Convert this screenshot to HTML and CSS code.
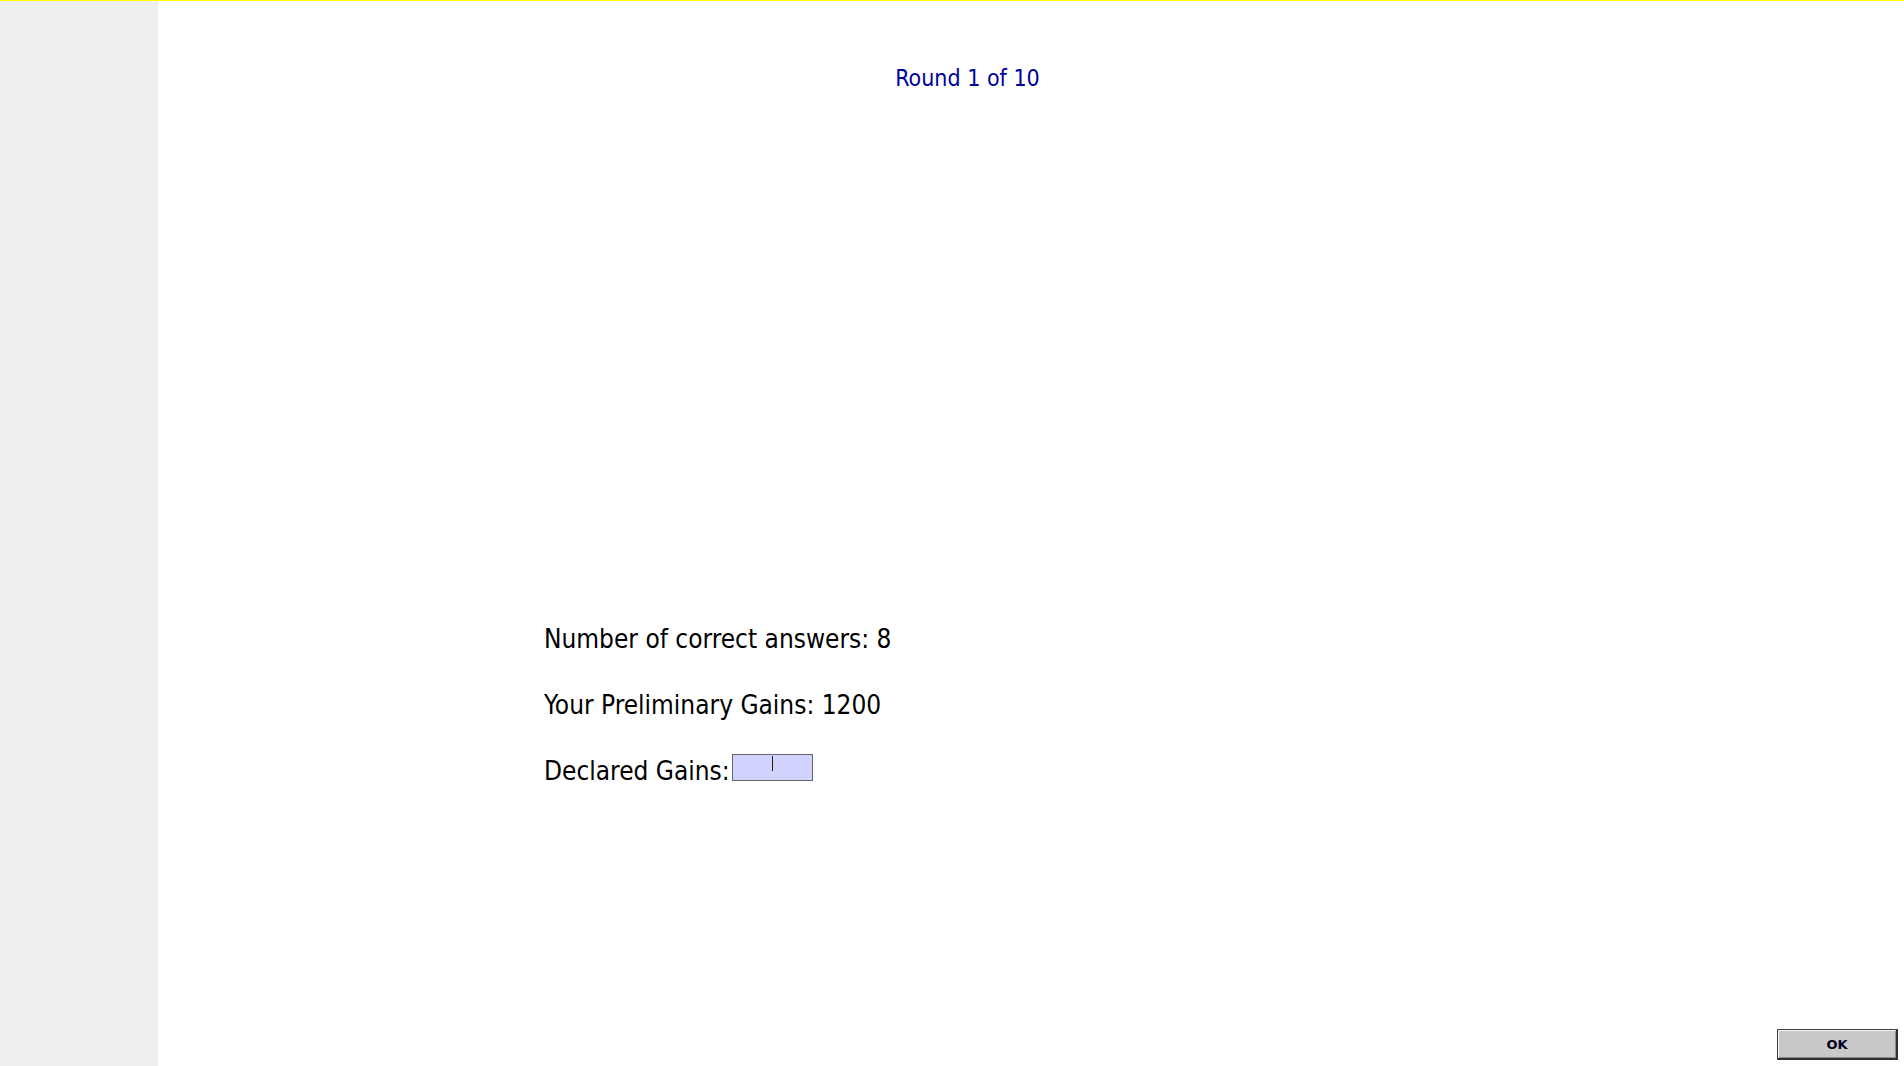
FILE: index.html
```html
<!DOCTYPE html>
<html lang="en">
<head>
<meta charset="utf-8">
<title>Round 1 of 10</title>
<link rel="stylesheet" href="styles.css">
</head>
<body>
<div class="page">
  <aside class="sidebar"></aside>
  <main class="main">
    <h1 class="round">Round 1 of 10</h1>
    <section class="info">
      <p class="line">Number of correct answers: 8</p>
      <p class="line">Your Preliminary Gains: 1200</p>
      <div class="line declared">
        <label for="gains">Declared Gains:</label>
        <span class="field"><input id="gains" class="gains-input" type="text"><span class="caret"></span></span>
      </div>
    </section>
  </main>
  <div class="actions">
    <button class="ok-btn" type="button">OK</button>
  </div>
</div>
</body>
</html>
```

FILE: styles.css
```css
html, body {
  margin: 0;
  padding: 0;
  background: #ffffff;
}

.page {
  display: grid;
  grid-template-columns: 158px 1fr 127px;
  height: 1065px;
  border-top: 1px solid #ffff00;
  font-family: "DejaVu Sans", Verdana, sans-serif;
  font-stretch: condensed;
}

.sidebar {
  background: #efefef;
}

.main {
  display: flex;
  flex-direction: column;
}

.round {
  margin: 65px 0 0 0;
  font-size: 23px;
  line-height: 24px;
  font-weight: normal;
  color: #0000a0;
  text-align: center;
}

.info {
  margin-top: 536px;
  padding-left: 386px;
  display: flex;
  flex-direction: column;
  gap: 40px;
  font-size: 26px;
  line-height: 26px;
  color: #000000;
}

.line {
  margin: 0;
}

.declared {
  display: flex;
  align-items: flex-start;
}

.field {
  position: relative;
  display: block;
  margin-top: -4px;
  margin-left: 2px;
}

.gains-input {
  display: block;
  box-sizing: border-box;
  width: 81px;
  height: 27px;
  margin: 0;
  padding: 0;
  border: 1px solid #666666;
  background: #d2d2ff;
  outline: none;
}

.caret {
  position: absolute;
  left: 40px;
  top: 2px;
  width: 1px;
  height: 15px;
  background: #2a1a00;
}

.actions {
  display: flex;
  align-items: flex-end;
}

.ok-btn {
  box-sizing: border-box;
  width: 121px;
  height: 31px;
  margin: 0 0 6px 0;
  padding: 0;
  background: #c8c8c8;
  border-style: solid;
  border-width: 1px 2px 2px 1px;
  border-color: #404040 #303030 #303030 #404040;
  box-shadow: inset 1px 1px 0 #f4f4f4, inset -1px -1px 0 #8a8a8a;
  font-family: "DejaVu Sans", Verdana, sans-serif;
  font-weight: bold;
  font-size: 13px;
  color: #000020;
}
```
